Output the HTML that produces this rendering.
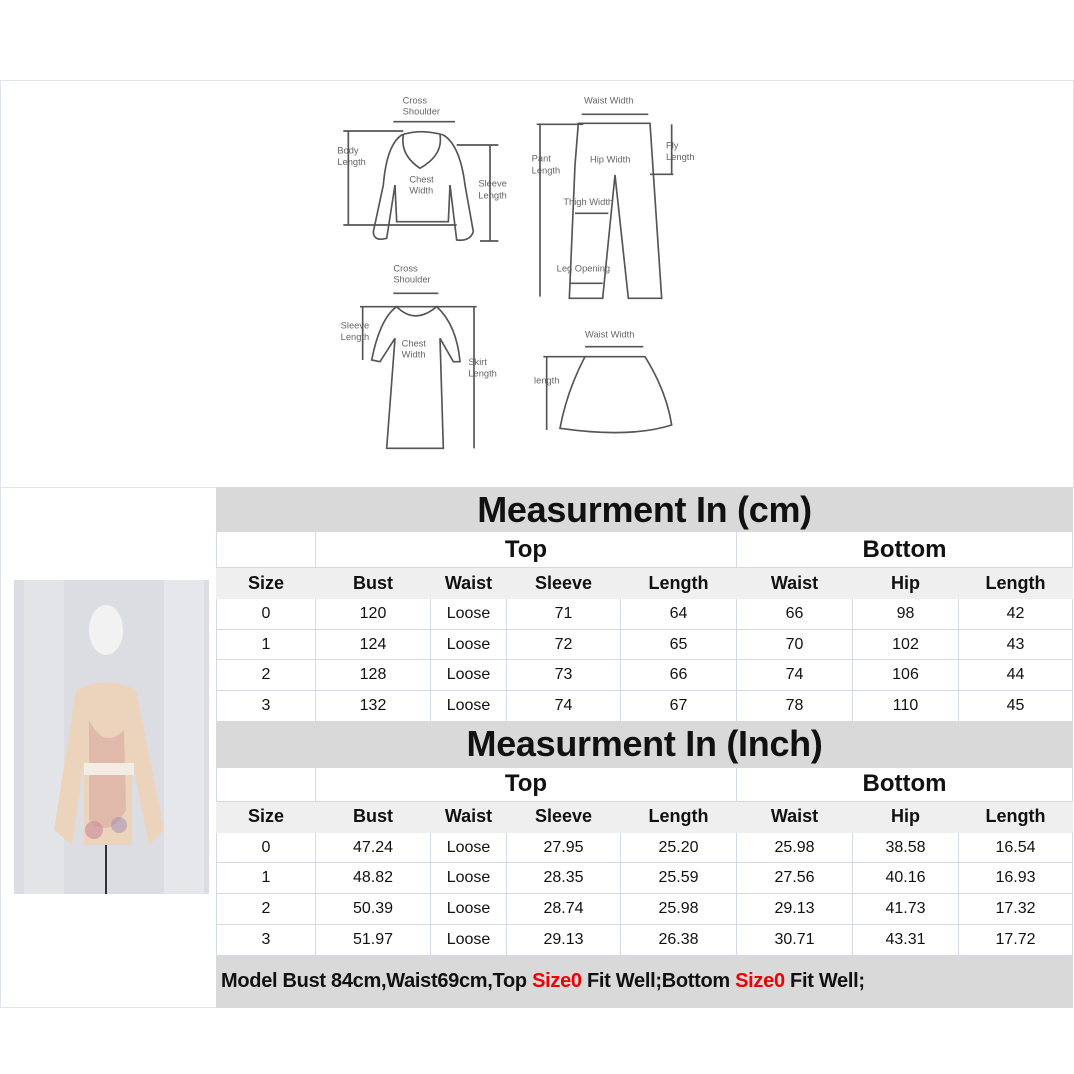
<!DOCTYPE html>
<html><head><meta charset="utf-8"><style>
*{margin:0;padding:0;box-sizing:border-box}
body{width:1074px;height:1074px;background:#fff;position:relative;overflow:hidden;font-family:"Liberation Sans",Arial,sans-serif}
.frame{position:absolute;left:0;top:80px;width:1074px;height:408px;border:1px solid #dfe3ea;border-bottom:none}
.lframe{position:absolute;left:0;top:487px;width:216px;height:521px;border-left:1px solid #dfe3ea;border-top:1px solid #dfe3ea;border-bottom:1px solid #dfe3ea}
table{position:absolute;left:216px;top:487px;border-collapse:collapse;width:856px;table-layout:fixed}
td{border:1px solid #d3d9e6;text-align:center;font-size:16px;color:#111;padding:0;overflow:hidden;white-space:nowrap}
.t td{background:#d9d9d9;font-weight:bold;font-size:36px;letter-spacing:-0.3px;border-color:#d9d9d9}
.tb td{background:#fff;font-weight:bold;font-size:24px}
.h td{background:#efefef;font-weight:bold;font-size:18px;border-color:#efefef}
.d td{height:30.7px}
.f td{background:#d9d9d9;text-align:left;font-weight:bold;font-size:20px;padding-left:4px;border-color:#d9d9d9;letter-spacing:-0.3px}
.r{color:#e00}
</style></head><body>
<div class="frame"></div>
<div class="lframe"></div>
<svg style="position:absolute;left:330px;top:85px" width="380" height="380" viewBox="0 0 1140 1140" fill="none" stroke="#555" stroke-width="5" font-family="Liberation Sans,sans-serif">
<g font-size="28" fill="#666" stroke="none">
<text x="218" y="56">Cross</text><text x="218" y="88">Shoulder</text>
<text x="22" y="205">Body</text><text x="22" y="240">Length</text>
<text x="238" y="293">Chest</text><text x="238" y="325">Width</text>
<text x="445" y="305">Sleeve</text><text x="445" y="340">Length</text>
<text x="762" y="56">Waist Width</text>
<text x="605" y="230">Pant</text><text x="605" y="265">Length</text>
<text x="1008" y="190">Fly</text><text x="1008" y="225">Length</text>
<text x="780" y="232">Hip Width</text>
<text x="700" y="360">Thigh Width</text>
<text x="680" y="560">Leg Opening</text>
<text x="190" y="560">Cross</text><text x="190" y="592">Shoulder</text>
<text x="32" y="730">Sleeve</text><text x="32" y="765">Length</text>
<text x="215" y="785">Chest</text><text x="215" y="818">Width</text>
<text x="415" y="840">Skirt</text><text x="415" y="875">Length</text>
<text x="765" y="758">Waist Width</text>
<text x="612" y="895">length</text>
</g>
<path d="M190 110H375M55 138V420M40 138H220M40 420H380M480 180V468M380 180H505M450 468H505"/>
<path d="M215 150Q270 130 340 150Q390 180 405 300L430 440Q420 470 380 465L360 300L355 410H200L195 300L170 460Q130 470 130 440L160 300Q170 180 215 150ZM220 150Q210 210 270 250Q340 210 330 150"/>
<path d="M755 88H955M630 118V635M620 118H760M1025 118V268M960 268H1030M735 385H835M720 595H818"/>
<path d="M745 115H960L995 640H895L855 270L818 640H718L735 240Z"/>
<path d="M190 625H325M98 665V825M90 665H440M432 665V1090"/>
<path d="M200 665Q255 720 320 665Q380 720 390 830L370 830L330 760L340 1090H170L195 760L150 830L125 825Q150 700 200 665Z"/>
<path d="M765 785H940M650 815V1035M640 815H770"/>
<path d="M765 815H945Q1010 920 1025 1020Q900 1060 690 1030Q710 920 765 815Z"/>
</svg>
<svg style="position:absolute;left:14px;top:580px" width="195" height="314" viewBox="0 0 195 314">
<rect width="195" height="314" fill="#dcdde2"/>
<rect x="10" y="0" width="40" height="314" fill="#e3e4e8"/><rect x="150" y="0" width="40" height="314" fill="#e6e7ea"/>
<ellipse cx="92" cy="50" rx="17" ry="25" fill="#f2f2f2"/>
<path d="M62 110Q92 95 122 110L150 250L135 265L118 180L118 265H70L70 180L58 265L40 250Z" fill="#ecd3bb"/>
<path d="M75 140Q90 170 110 150L112 230Q95 260 75 240Z" fill="#d8a8a0" opacity=".6"/>
<circle cx="80" cy="250" r="9" fill="#c98a9a" opacity=".6"/><circle cx="105" cy="245" r="8" fill="#9a8ab8" opacity=".5"/>
<rect x="70" y="183" width="50" height="12" fill="#f3ece2"/>
<path d="M92 265V314" stroke="#333" stroke-width="2"/>
</svg>
<table>
<colgroup><col style="width:99px"><col style="width:115px"><col style="width:76px"><col style="width:114px"><col style="width:116px"><col style="width:116px"><col style="width:106px"><col style="width:114px"></colgroup>
<tr class="t"><td colspan="8" style="height:44px">Measurment In (cm)</td></tr>
<tr class="tb"><td style="height:36px"></td><td colspan="4">Top</td><td colspan="3">Bottom</td></tr>
<tr class="h"><td style="height:31px">Size</td><td>Bust</td><td>Waist</td><td>Sleeve</td><td>Length</td><td>Waist</td><td>Hip</td><td>Length</td></tr>
<tr class="d"><td>0</td><td>120</td><td>Loose</td><td>71</td><td>64</td><td>66</td><td>98</td><td>42</td></tr>
<tr class="d"><td>1</td><td>124</td><td>Loose</td><td>72</td><td>65</td><td>70</td><td>102</td><td>43</td></tr>
<tr class="d"><td>2</td><td>128</td><td>Loose</td><td>73</td><td>66</td><td>74</td><td>106</td><td>44</td></tr>
<tr class="d"><td>3</td><td>132</td><td>Loose</td><td>74</td><td>67</td><td>78</td><td>110</td><td>45</td></tr>
<tr class="t"><td colspan="8" style="height:46px">Measurment In (Inch)</td></tr>
<tr class="tb"><td style="height:34px"></td><td colspan="4">Top</td><td colspan="3">Bottom</td></tr>
<tr class="h"><td style="height:31px">Size</td><td>Bust</td><td>Waist</td><td>Sleeve</td><td>Length</td><td>Waist</td><td>Hip</td><td>Length</td></tr>
<tr class="d"><td>0</td><td>47.24</td><td>Loose</td><td>27.95</td><td>25.20</td><td>25.98</td><td>38.58</td><td>16.54</td></tr>
<tr class="d"><td>1</td><td>48.82</td><td>Loose</td><td>28.35</td><td>25.59</td><td>27.56</td><td>40.16</td><td>16.93</td></tr>
<tr class="d"><td>2</td><td>50.39</td><td>Loose</td><td>28.74</td><td>25.98</td><td>29.13</td><td>41.73</td><td>17.32</td></tr>
<tr class="d"><td>3</td><td>51.97</td><td>Loose</td><td>29.13</td><td>26.38</td><td>30.71</td><td>43.31</td><td>17.72</td></tr>
<tr class="f"><td colspan="8" style="height:52px">Model Bust 84cm,Waist69cm,Top <span class="r">Size0</span> Fit Well;Bottom <span class="r">Size0</span> Fit Well;</td></tr>
</table>
</body></html>
